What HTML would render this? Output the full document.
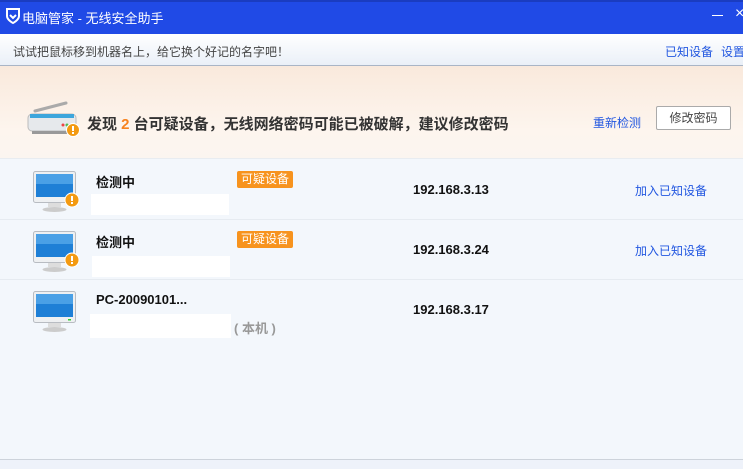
<!DOCTYPE html>
<html><head><meta charset="utf-8"><style>
*{margin:0;padding:0;box-sizing:border-box}
body{width:743px;height:469px;overflow:hidden;background:#f3f7fc;font-family:"Liberation Sans","Noto Sans CJK SC",sans-serif;position:relative}
.a{position:absolute;white-space:nowrap}
#title{left:0;top:0;width:743px;height:34px;background:#204ae6;border-top:2px solid #1a3cc0}
#tool{left:0;top:34px;width:743px;height:32px;background:linear-gradient(#fff,#eaf0f8);border-bottom:1px solid #a9b5c6}
#ban{left:0;top:66px;width:743px;height:93px;background:linear-gradient(180deg,#f9e9dc,#fdf5ee 70%,#fbf5f0);border-bottom:1px solid #e8ecf1}
.row{left:0;width:743px;height:60px;border-bottom:1px solid #e6ebf1;background:#f3f7fc}
.blue{color:#2257e0;font-size:12px}
.tag{background:#f7931e;color:#fff;font-size:12px;padding:0 4px;height:17px;line-height:17px;border-radius:2px}
.wb{background:#fff;width:138px;height:21px}
.ip{font-weight:bold;font-size:13px;color:#111}
.nm{font-weight:bold;font-size:13px;color:#111}
</style></head><body>
<div class="a" id="title"></div>
<svg class="a" style="left:5px;top:7px" width="16" height="18" viewBox="0 0 16 18"><path d="M2 2 H14 V9 C14 13 8 16 8 16 C8 16 2 13 2 9 Z" fill="none" stroke="#fff" stroke-width="2"/><path d="M5 8 L8 11 L11 8" fill="none" stroke="#fff" stroke-width="2"/></svg>
<div class="a" style="left:22px;top:8px;color:#fff;font-size:13px">电脑管家 - 无线安全助手</div>
<div class="a" style="left:712px;top:15px;width:11px;height:1px;background:#fff"></div>
<div class="a" style="left:735px;top:5px;color:#fff;font-size:16px">×</div>
<div class="a" id="tool"></div>
<div class="a" style="left:13px;top:43px;font-size:12px;color:#444">试试把鼠标移到机器名上，给它换个好记的名字吧！</div>
<div class="a blue" style="left:665px;top:43px">已知设备</div>
<div class="a blue" style="left:721px;top:43px">设置</div>
<div class="a" id="ban"></div>
<svg class="a" style="left:26px;top:101px" width="56" height="36" viewBox="0 0 56 36"><line x1="9" y1="10" x2="40" y2="2" stroke="#aaa" stroke-width="3" stroke-linecap="round"/><rect x="2" y="13" width="48" height="17" rx="4" fill="#e6e9ec" stroke="#bbb"/><rect x="4" y="13" width="44" height="4" fill="#3da6dc"/><rect x="6" y="30" width="40" height="3" fill="#999"/><circle cx="37" cy="24" r="1.5" fill="#e44"/><circle cx="41" cy="24" r="1.5" fill="#5b5"/><circle cx="45" cy="24" r="1.5" fill="#5b5"/><circle cx="47" cy="29" r="6.5" fill="#f39a12" stroke="#fff"/><rect x="46" y="25" width="2" height="5" fill="#fff"/><rect x="46" y="31" width="2" height="2" fill="#fff"/></svg>
<div class="a" style="left:87px;top:113px;font-size:15px;font-weight:bold;color:#333">发现 <span style="color:#f7821e">2</span> 台可疑设备，无线网络密码可能已被破解，建议修改密码</div>
<div class="a blue" style="left:593px;top:114px">重新检测</div>
<div class="a" style="left:656px;top:106px;width:75px;height:24px;border:1px solid #aaa;background:#fff;border-radius:2px;font-size:12px;color:#444;text-align:center;line-height:22px">修改密码</div>

<div class="a row" style="top:160px"></div>
<div class="a row" style="top:220px"></div>
<div class="a row" style="top:280px;border:none"></div>
<div class="a" style="left:0;top:459px;width:743px;height:1px;background:#cdd3db"></div>
<div class="a" style="left:0;top:460px;width:743px;height:9px;background:#eef2fa"></div>

<!-- monitors -->
<svg width="0" height="0" style="position:absolute"><defs><g id="mon"><rect x="0.5" y="0.5" width="42" height="31" rx="2" fill="#eef0f2" stroke="#b8bcc2"/><rect x="3" y="3" width="37" height="23" fill="#1e7fd6"/><rect x="3" y="3" width="37" height="10" fill="#4aa0e6"/><rect x="15" y="32" width="13" height="4" fill="#ddd"/><ellipse cx="21.5" cy="38.5" rx="12" ry="2.5" fill="#ccc"/></g></defs></svg>
<svg class="a" style="left:33px;top:171px" width="50" height="44"><use href="#mon"/><circle cx="39" cy="29" r="7" fill="#f39a12" stroke="#fff"/><rect x="38" y="25" width="2" height="5" fill="#fff"/><rect x="38" y="31" width="2" height="2" fill="#fff"/></svg>
<svg class="a" style="left:33px;top:231px" width="50" height="44"><use href="#mon"/><circle cx="39" cy="29" r="7" fill="#f39a12" stroke="#fff"/><rect x="38" y="25" width="2" height="5" fill="#fff"/><rect x="38" y="31" width="2" height="2" fill="#fff"/></svg>
<svg class="a" style="left:33px;top:291px" width="50" height="44"><use href="#mon"/><rect x="35" y="28" width="3" height="1.5" fill="#3c3"/></svg>

<div class="a nm" style="left:96px;top:172px">检测中</div>
<div class="a wb" style="left:91px;top:194px"></div>
<div class="a tag" style="left:237px;top:171px">可疑设备</div>
<div class="a ip" style="left:413px;top:182px">192.168.3.13</div>
<div class="a blue" style="left:635px;top:182px">加入已知设备</div>

<div class="a nm" style="left:96px;top:232px">检测中</div>
<div class="a wb" style="left:92px;top:256px"></div>
<div class="a tag" style="left:237px;top:231px">可疑设备</div>
<div class="a ip" style="left:413px;top:242px">192.168.3.24</div>
<div class="a blue" style="left:635px;top:242px">加入已知设备</div>

<div class="a nm" style="left:96px;top:292px">PC-20090101...</div>
<div class="a wb" style="left:90px;top:314px;width:141px;height:24px"></div>
<div class="a" style="left:234px;top:318px;font-size:13px;font-weight:bold;color:#999">( 本机 )</div>
<div class="a ip" style="left:413px;top:302px">192.168.3.17</div>
</body></html>
